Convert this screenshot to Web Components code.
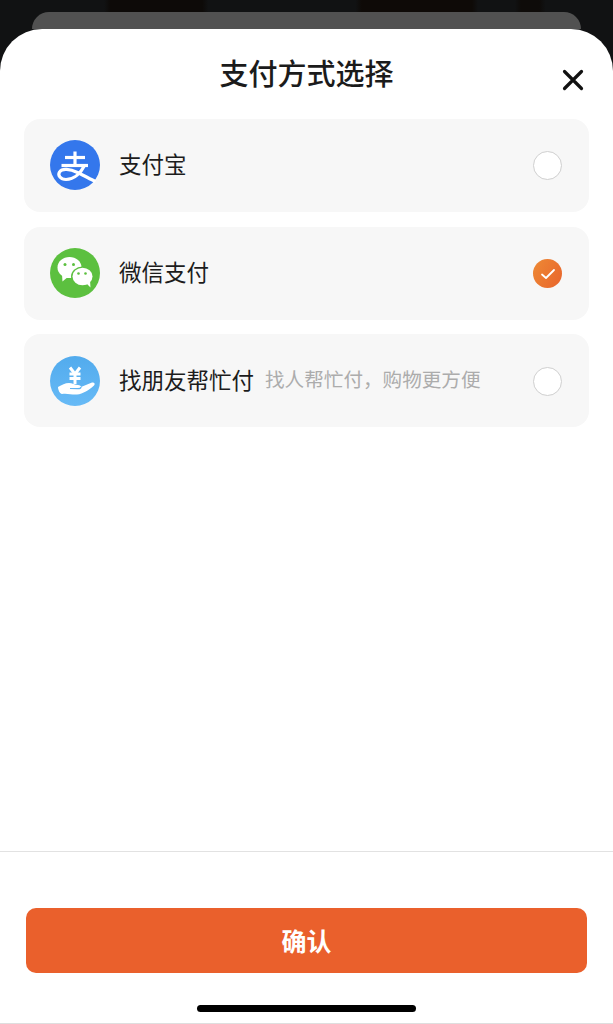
<!DOCTYPE html>
<html lang="zh">
<head>
<meta charset="utf-8">
<title>支付方式选择</title>
<style>
  html, body { margin: 0; padding: 0; background: #0f0f0f; }
  body { font-family: "Noto Sans CJK SC", "Liberation Sans", sans-serif; overflow: hidden; }
</style>
</head>
<body>
<pay-sheet heading="支付方式选择">
  <pay-option label="支付宝">
    <svg slot="icon" viewBox="0 0 50 50" width="50" height="50">
      <circle cx="25" cy="25" r="25" fill="#3477ec"/>
      <g fill="none" stroke="#fff" stroke-width="3.200" stroke-linecap="butt">
        <path d="M15 17.500H35"/>
        <path d="M25 11.500V25"/>
        <path d="M11.500 25.500H38"/>
        <path d="M34.500 25.500C31 32.500 24.500 39.500 16 39.500C10.500 39.500 7.500 35.500 9.500 32C12 28 20 29 27.500 32.500C34 35.500 40 39 45.500 41.500"/>
      </g>
    </svg>
  </pay-option>
  <pay-option label="微信支付" checked>
    <svg slot="icon" viewBox="0 0 50 50" width="50" height="50">
      <circle cx="25" cy="25" r="25" fill="#5cc03f"/>
      <ellipse cx="19.500" cy="19.500" rx="12" ry="10.500" fill="#fff"/>
      <path d="M12 26L12.500 33.500L19 28Z" fill="#fff"/>
      <ellipse cx="32.500" cy="28.500" rx="11.500" ry="10" fill="#5cc03f"/>
      <ellipse cx="32.500" cy="28.500" rx="10" ry="8.700" fill="#fff"/>
      <path d="M36 35L40.500 39.500L40 32Z" fill="#fff"/>
      <circle cx="15" cy="16.500" r="1.500" fill="#5cc03f"/>
      <circle cx="23.500" cy="16.500" r="1.500" fill="#5cc03f"/>
      <circle cx="28.500" cy="25.500" r="1.300" fill="#5cc03f"/>
      <circle cx="35.500" cy="25.500" r="1.300" fill="#5cc03f"/>
    </svg>
  </pay-option>
  <pay-option label="找朋友帮忙付" note="找人帮忙付，购物更方便">
    <svg slot="icon" viewBox="0 0 50 50" width="50" height="50">
      <defs>
        <linearGradient id="sky" x1="0" y1="0" x2="0" y2="1">
          <stop offset="0" stop-color="#52abed"/>
          <stop offset="1" stop-color="#67baf6"/>
        </linearGradient>
      </defs>
      <circle cx="25" cy="25" r="25" fill="url(#sky)"/>
      <g fill="none" stroke="#fff" stroke-width="3" stroke-linejoin="round">
        <path d="M20 11.500L25 18L30 11.500"/>
        <path d="M19.500 18H30.500"/>
        <path d="M19.500 22.500H30.500"/>
        <path d="M25 18V28"/>
      </g>
      <path d="M8 31C12 29 15 27 19 27C22 27 25 29 28 29C30 29 31 30 31 31L42 26.500C44.500 26 45.500 28 44 29.500C39 34 33 38 27 38.500C22 39 17 37 12 38C10 38 8 34 8 31Z" fill="#fff"/>
      <path d="M20 32.500L28 32.700C29.500 32.700 31 32 31 31" fill="none" stroke="#5db3f2" stroke-width="1.200"/>
    </svg>
  </pay-option>
</pay-sheet>

<template id="pay-sheet-tpl">
  <style>
    :host { display: flex; flex-direction: column; width: 613px; height: 1024px; box-sizing: border-box; padding-top: 12px; background: linear-gradient(90deg, #111213 0 17%, #0d0a08 18% 33%, #111213 34% 58%, #0e0a07 59% 77%, #111213 78% 84%, #0e0b09 85% 88%, #111213 89%); }
    .ghost { height: 17px; margin: 0 32px; background: #515151; border-radius: 26px 26px 0 0; flex: none; }
    .sheet { flex: 1; display: flex; flex-direction: column; background: #fff; border-radius: 42px 42px 0 0; min-height: 0; }
    header { flex: none; height: 90px; position: relative; display: flex; justify-content: center; }
    h1 { margin: 22px 0 0; font-size: 29px; line-height: 42px; font-weight: 500; color: #1b1b1b; }
    .close { position: absolute; right: 29px; top: 40px; width: 22px; height: 22px; }
    .list { flex: 1; display: flex; flex-direction: column; gap: 15px; padding: 0 24px; }
    ::slotted(:last-child) { margin-top: -1px; padding-top: 2px; }
    .foot { flex: none; height: 173px; box-sizing: border-box; border-top: 1px solid #e2e2e2; border-bottom: 1px solid #dedede; padding: 56px 26px 0; display: flex; flex-direction: column; align-items: center; }
    button { width: 100%; height: 65px; flex: none; border: 0; border-radius: 10px; background: #ea602c; color: #fff; font: 700 25px/1 "Noto Sans CJK SC", "Liberation Sans", sans-serif; }
    .home { width: 219px; height: 7px; margin-top: 32px; border-radius: 4px; background: #000; flex: none; }
  </style>
  <div class="ghost"></div>
  <div class="sheet">
    <header>
      <h1 id="title"></h1>
      <svg class="close" viewBox="0 0 22 22"><path d="M2.500 2.500L19.500 19.500M19.500 2.500L2.500 19.500" fill="none" stroke="#111" stroke-width="3.200" stroke-linecap="round"/></svg>
    </header>
    <div class="list"><slot></slot></div>
    <div class="foot">
      <button>确认</button>
      <div class="home"></div>
    </div>
  </div>
</template>

<template id="pay-option-tpl">
  <style>
    :host { display: flex; align-items: center; height: 93px; box-sizing: border-box; padding: 0 27px 0 26px; border-radius: 16px; background: #f7f7f7; }
    .icon { flex: none; width: 50px; height: 50px; margin: -1px 19px 0 0; display: block; }
    .label { flex: none; font-size: 22.500px; line-height: 32px; color: #1c1c1c; margin-top: -6px; }
    .note { flex: 1; font-size: 19.600px; line-height: 28px; color: #acacac; margin: -6px 0 0 11px; white-space: nowrap; }
  </style>
  <slot class="icon" name="icon"></slot>
  <span class="label" id="label"></span>
  <span class="note" id="note"></span>
  <pay-radio id="radio"></pay-radio>
</template>

<template id="pay-radio-tpl">
  <style>
    :host { display: block; flex: none; width: 29px; height: 29px; }
    .off { box-sizing: border-box; width: 29px; height: 29px; border: 1.700px solid #cfcfcf; border-radius: 50%; background: #fff; }
    .on { display: flex; align-items: center; justify-content: center; width: 29px; height: 29px; border-radius: 50%; background: linear-gradient(120deg, #ee8a35, #e8642c); }
  </style>
  <div id="dot" class="off"></div>
</template>

<script>
  class PayRadio extends HTMLElement {
    static get observedAttributes() { return ['checked']; }

    constructor() {
      super();
      this.attachShadow({ mode: 'open' });
      this.shadowRoot.appendChild(document.getElementById('pay-radio-tpl').content.cloneNode(true));
    }

    attributeChangedCallback() {
      const dot = this.shadowRoot.getElementById('dot');
      dot.className = 'on';
      dot.innerHTML = '<svg viewBox="0 0 16 12" width="16" height="12"><path d="M2 6.500L6 10L14 2" fill="none" stroke="#fff" stroke-width="1.800" stroke-linecap="round" stroke-linejoin="round"/></svg>';
    }
  }

  class PayOption extends HTMLElement {
    connectedCallback() {
      this.attachShadow({ mode: 'open' });
      this.shadowRoot.appendChild(document.getElementById('pay-option-tpl').content.cloneNode(true));
      this.shadowRoot.getElementById('label').textContent = this.getAttribute('label');
      this.shadowRoot.getElementById('note').textContent = this.getAttribute('note') || '';
      if (this.hasAttribute('checked')) this.shadowRoot.getElementById('radio').setAttribute('checked', '');
    }
  }

  class PaySheet extends HTMLElement {
    connectedCallback() {
      this.attachShadow({ mode: 'open' });
      this.shadowRoot.appendChild(document.getElementById('pay-sheet-tpl').content.cloneNode(true));
      this.shadowRoot.getElementById('title').textContent = this.getAttribute('heading');
    }
  }

  customElements.define('pay-radio', PayRadio);
  customElements.define('pay-option', PayOption);
  customElements.define('pay-sheet', PaySheet);
</script>
</body>
</html>
